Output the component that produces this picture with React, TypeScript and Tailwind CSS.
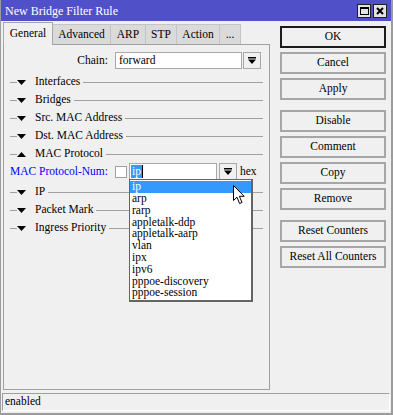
import React from "react";

const serif = "font-['Liberation_Serif',serif] text-[11.5px] leading-none";

const tabs = [
  { label: "General", w: "w-[50px]", active: true },
  { label: "Advanced", w: "w-[58px]" },
  { label: "ARP", w: "w-[35px]" },
  { label: "STP", w: "w-[31px]" },
  { label: "Action", w: "w-[43px]" },
  { label: "...", w: "w-[21px]" },
];

const protocols = [
  "ip",
  "arp",
  "rarp",
  "appletalk-ddp",
  "appletalk-aarp",
  "vlan",
  "ipx",
  "ipv6",
  "pppoe-discovery",
  "pppoe-session",
];

function DropIcon() {
  return (
    <svg width="8" height="7" viewBox="0 0 8 7">
      <rect x="0" y="0" width="8" height="1.5" fill="#000" />
      <path d="M0 2.5 L8 2.5 L4 7 Z" fill="#000" />
    </svg>
  );
}

function Tri({ up }: { up?: boolean }) {
  return (
    <svg width="9" height="5" viewBox="0 0 9 5" className="shrink-0">
      {up ? <path d="M0 5 L9 5 L4.5 0 Z" fill="#000" /> : <path d="M0 0 L9 0 L4.5 5 Z" fill="#000" />}
    </svg>
  );
}

function Section({ label, up }: { label: string; up?: boolean }) {
  return (
    <div className="h-[18px] flex items-center pl-[6px] pr-[6px]">
      <div className="w-[7px] h-px bg-[#a0a0a0]" />
      <Tri up={up} />
      <span className="ml-[9px] whitespace-nowrap">{label}</span>
      <div className="flex-1 ml-[3px] h-px bg-[#a0a0a0]" />
    </div>
  );
}

function Btn({ label, primary }: { label: string; primary?: boolean }) {
  return (
    <div
      className={
        "h-[22px] w-[106px] flex items-center justify-center bg-[#f0f0f0] border-2 " +
        (primary ? "border-[#1c1c1c]" : "border-[#a6a6a6]")
      }
    >
      {label}
    </div>
  );
}

export default function App() {
  return (
    <div className={"w-[393px] h-[415px] bg-[#f0f0f0] border-l border-r-2 border-b-2 border-[#9c9c9c] flex flex-col " + serif}>
      {/* title bar */}
      <div className="h-[21px] bg-[#5050c8] flex items-center pl-[4px] pr-[4px] shrink-0">
        <span className="text-white text-[12px]">New Bridge Filter Rule</span>
        <div className="ml-auto flex gap-[2px]">
          <div className="w-[14px] h-[14px] bg-[#e4e4e4] border border-[#202020] flex items-center justify-center">
            <div className="w-[9px] h-[8px] border border-black border-t-2" />
          </div>
          <div className="w-[14px] h-[14px] bg-[#e4e4e4] border border-[#202020] flex items-center justify-center">
            <svg width="8" height="8" viewBox="0 0 8 8">
              <path d="M1 1 L7 7 M7 1 L1 7" stroke="#000" strokeWidth="2" />
            </svg>
          </div>
        </div>
      </div>

      <div className="flex flex-1">
        {/* left side */}
        <div className="ml-[2px] w-[267px] pt-[1px] flex flex-col">
          <div className="h-[22px] flex items-end">
            {tabs.map((t) =>
              t.active ? (
                <div
                  key={t.label}
                  className={t.w + " h-[23px] border border-b-0 border-[#a8a8a8] bg-[#f0f0f0] flex items-center justify-center relative -mb-px z-10"}
                >
                  {t.label}
                </div>
              ) : (
                <div
                  key={t.label}
                  className={t.w + " h-[20px] border border-b-0 border-l-0 border-[#c4c4c4] bg-[#dadada] flex items-center justify-center"}
                >
                  {t.label}
                </div>
              )
            )}
          </div>
          <div className="h-[346px] border border-[#a0a0a0] flex flex-col">
            <div className="flex items-center mt-[7px]">
              <div className="w-[104px] text-right">Chain:</div>
              <div className="ml-[7px] w-[127px] h-[17px] bg-white border border-[#a8a8a8] flex items-center pl-[3px]">forward</div>
              <div className="ml-px w-[18px] h-[17px] border border-[#a8a8a8] flex items-center justify-center">
                <DropIcon />
              </div>
            </div>
            <div className="mt-[4px] flex flex-col">
              <Section label="Interfaces" />
              <Section label="Bridges" />
              <Section label="Src. MAC Address" />
              <Section label="Dst. MAC Address" />
              <Section label="MAC Protocol" up />
              <div className="h-[20px] flex items-start relative z-20">
                <div className="w-[104px] text-right text-[#0000ff] h-[17px] flex items-center justify-end">MAC Protocol-Num:</div>
                <div className="ml-[7px] mt-[3px] w-[12px] h-[12px] bg-white border border-[#a0a0a0]" />
                <div className="ml-[2px] w-[88px] h-[17px] bg-white border border-[#a8a8a8] flex items-center pl-[1px] relative">
                  <span className="bg-[#3399ff] text-white px-[1px] h-[13px] flex items-center">ip</span>
                  <span className="w-px h-[13px] bg-black" />
                  {/* open list */}
                  <div className="absolute left-[-1px] top-[15px] w-[124px] bg-white border border-[#646464] border-r-2 border-b-2 flex flex-col py-px">
                    {protocols.map((p, i) => (
                      <div
                        key={p}
                        className={"h-[11.8px] flex items-center pl-[2px] whitespace-nowrap " + (i === 0 ? "bg-[#3399ff] text-white" : "")}
                      >
                        {p}
                      </div>
                    ))}
                    <svg width="13" height="20" viewBox="0 0 13 20" className="absolute left-[103px] top-[5px]">
                      <path d="M0.5 0.5 L0.5 15.5 L4 12.2 L6.6 18.5 L9 17.5 L6.4 11.3 L11.2 11.3 Z" fill="#fff" stroke="#000" strokeWidth="1" />
                    </svg>
                  </div>
                </div>
                <div className="ml-[2px] w-[18px] h-[17px] border border-[#a8a8a8] flex items-center justify-center">
                  <DropIcon />
                </div>
                <div className="ml-[3px] h-[17px] flex items-center">hex</div>
              </div>
              <Section label="IP" />
              <Section label="Packet Mark" />
              <Section label="Ingress Priority" />
            </div>
          </div>
        </div>

        {/* right buttons */}
        <div className="ml-[10px] pt-[5px] flex flex-col">
          <div className="flex flex-col gap-[4px]">
            <Btn label="OK" primary />
            <Btn label="Cancel" />
            <Btn label="Apply" />
          </div>
          <div className="mt-[10px] flex flex-col gap-[4px]">
            <Btn label="Disable" />
            <Btn label="Comment" />
            <Btn label="Copy" />
            <Btn label="Remove" />
          </div>
          <div className="mt-[10px] flex flex-col gap-[4px]">
            <Btn label="Reset Counters" />
            <Btn label="Reset All Counters" />
          </div>
        </div>
      </div>

      {/* status bar */}
      <div className="mx-[1px] mb-[2px] h-[18px] border border-t-[#a0a0a0] border-l-[#a0a0a0] border-r-white border-b-white flex items-center pl-[2px]">
        enabled
      </div>
    </div>
  );
}
